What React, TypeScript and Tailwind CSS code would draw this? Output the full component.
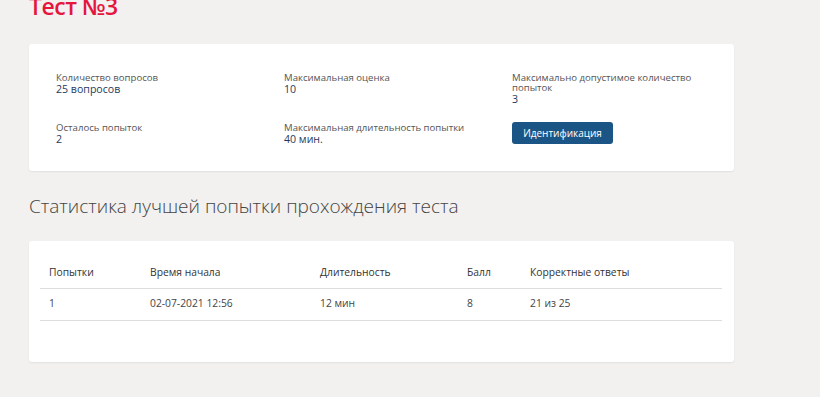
import React from 'react'

interface InfoItem {
  label: string
  value: string
}

const topRow: InfoItem[] = [
  { label: 'Количество вопросов', value: '25 вопросов' },
  { label: 'Максимальная оценка', value: '10' },
  { label: 'Максимально допустимое количество попыток', value: '3' },
]

const bottomRow: InfoItem[] = [
  { label: 'Осталось попыток', value: '2' },
  { label: 'Максимальная длительность попытки', value: '40 мин.' },
]

const columns = [
  { title: 'Попытки', width: 'w-[101px]' },
  { title: 'Время начала', width: 'w-[170px]' },
  { title: 'Длительность', width: 'w-[147px]' },
  { title: 'Балл', width: 'w-[63px]' },
  { title: 'Корректные ответы', width: '' },
]

const rows = [['1', '02-07-2021 12:56', '12 мин', '8', '21 из 25']]

function Info({ item }: { item: InfoItem }) {
  return (
    <div className="flex flex-col">
      <span className="text-[9.6px] leading-[10px] text-[#555] max-w-[190px]">{item.label}</span>
      <span className="text-[10.6px] leading-[12px] text-[#1e3a5c]">{item.value}</span>
    </div>
  )
}

export default function App() {
  return (
    <div className="min-h-[397px] bg-[#f2f1ef] pl-[29px] font-['Open_Sans',sans-serif] overflow-hidden">
      <div className="w-[705px]">
        <h1 className="mt-[-6px] text-[23px] leading-[24px] font-semibold tracking-[-0.5px] text-[#e4163e]">Тест №3</h1>

        <div className="mt-[26px] bg-white rounded-[3px] shadow-[0_1px_2px_rgba(0,0,0,0.07)] pt-[29px] pb-[26px] pl-[27px]">
          <div className="grid grid-cols-[228px_228px_200px] grid-rows-[50px_22px]">
            {topRow.map((item) => (
              <Info key={item.label} item={item} />
            ))}
            {bottomRow.map((item) => (
              <Info key={item.label} item={item} />
            ))}
            <div>
              <button className="block -mt-[1px] h-[22px] w-[101px] rounded-[3px] bg-[#1b5586] text-white text-[10px] leading-none">
                Идентификация
              </button>
            </div>
          </div>
        </div>

        <h2 className="mt-[22px] text-[19px] leading-[26px] font-light text-[#444]">
          Статистика лучшей попытки прохождения теста
        </h2>

        <div className="mt-[22px] bg-white rounded-[3px] shadow-[0_1px_2px_rgba(0,0,0,0.07)] pt-[16px] pb-[41px] pl-[11px] pr-[12px]">
          <table className="w-full border-collapse text-[10.3px]">
            <thead>
              <tr className="h-[31px] border-b border-[#ddd]">
                {columns.map((c) => (
                  <th key={c.title} className={`${c.width} pl-[9px] text-left font-normal text-[#333]`}>
                    {c.title}
                  </th>
                ))}
              </tr>
            </thead>
            <tbody>
              {rows.map((r, i) => (
                <tr key={i} className="h-[32px] border-b border-[#ddd]">
                  {r.map((cell, j) => (
                    <td key={j} className="pl-[9px] text-[#444]">
                      {cell}
                    </td>
                  ))}
                </tr>
              ))}
            </tbody>
          </table>
        </div>
      </div>
    </div>
  )
}
